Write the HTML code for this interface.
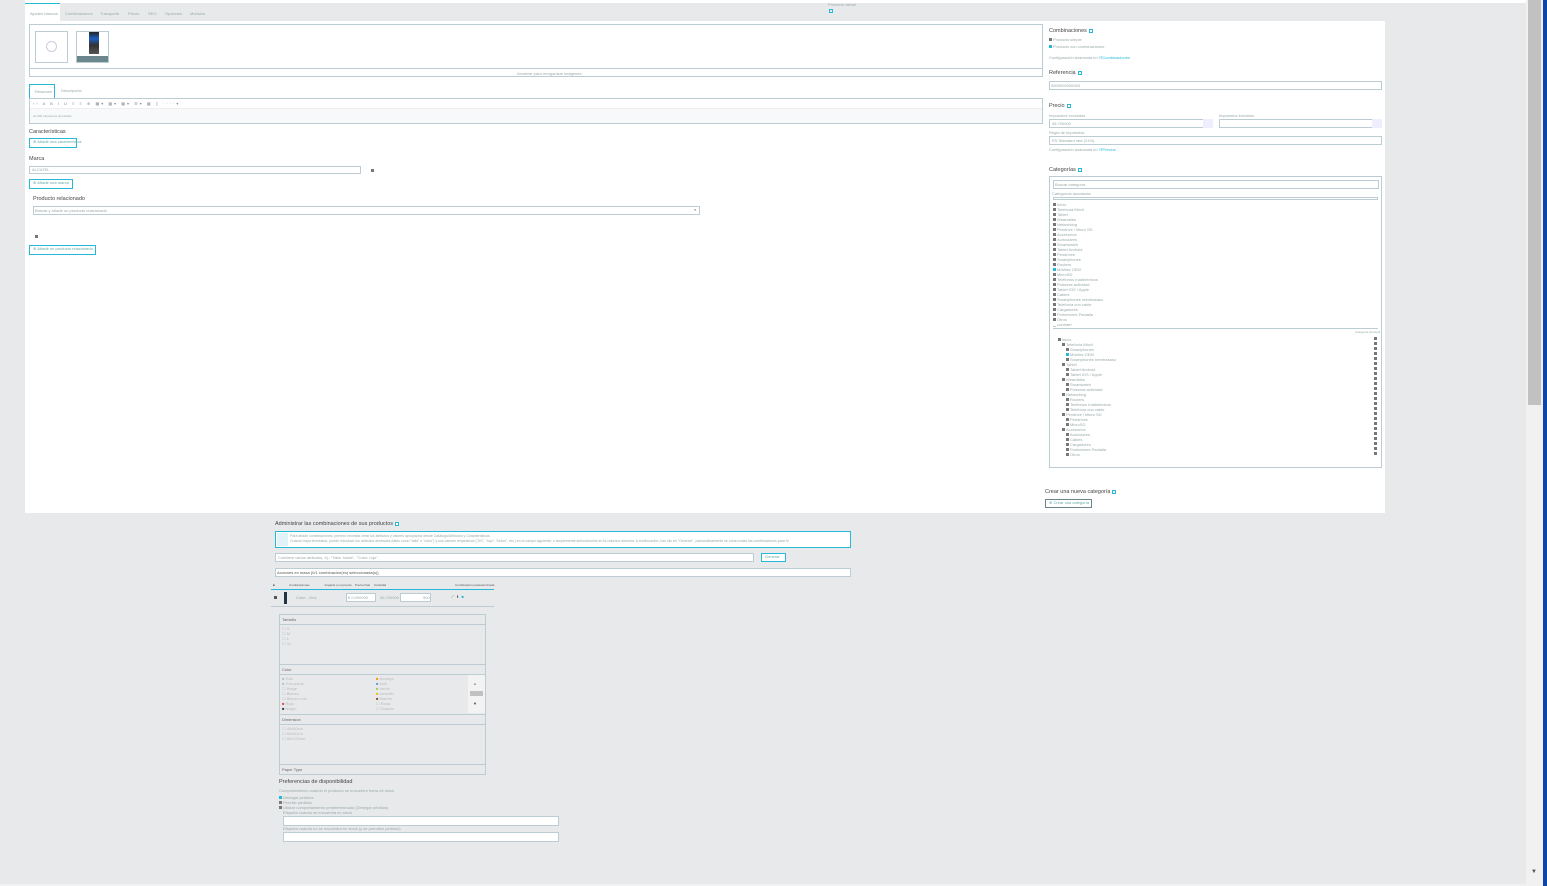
<!DOCTYPE html>
<html><head><meta charset="utf-8">
<style>
*{box-sizing:border-box;margin:0;padding:0}
body{width:1547px;height:886px;overflow:hidden;background:#e8e9eb;font-family:"Liberation Sans",sans-serif;color:#888;position:relative}
.a{position:absolute}
.t{font-size:4px;color:#9aa;white-space:nowrap;line-height:5px}
.h{font-size:5.5px;color:#444;white-space:nowrap}
.bx{border:1px solid #bbcdd3;background:#fff}
.btn{border:1.5px solid #25b9d7;background:#fff;font-size:4px;color:#4b8;line-height:6px;padding:0 3px;white-space:nowrap;color:#6aa}
.q{display:inline-block;width:4px;height:4px;background:#25b9d7;border:1px solid #25b9d7;box-shadow:inset 0 0 0 1px #fff;vertical-align:middle;margin-left:2px}
.li{font-size:4px;line-height:5px;color:#9aa;white-space:nowrap}
.li b{display:inline-block;width:3px;height:3px;background:#777;margin-right:1px;vertical-align:middle}
</style></head><body>
<!-- top strip -->
<div class="a" style="left:25px;top:0;width:1502px;height:3px;background:#fff"></div>
<!-- tabs -->
<div class="a" style="left:25px;top:3px;width:35px;height:18px;background:#fff;border-top:1px solid #25b9d7"></div>
<div class="a t" style="left:30px;top:11px">Ajustes básicos</div>
<div class="a t" style="left:65px;top:11px">Combinaciones</div>
<div class="a t" style="left:100px;top:11px">Transporte</div>
<div class="a t" style="left:128px;top:11px">Precio</div>
<div class="a t" style="left:148px;top:11px">SEO</div>
<div class="a t" style="left:165px;top:11px">Opciones</div>
<div class="a t" style="left:190px;top:11px">Módulos</div>
<div class="a t" style="left:828px;top:2px">Producto virtual</div>
<div class="a" style="left:829px;top:9px;width:4px;height:4px;border:1px solid #25b9d7"></div>
<!-- main panel -->
<div class="a" style="left:25px;top:21px;width:1360px;height:492px;background:#fff"></div>
<div class="a bx" style="left:29px;top:24px;width:1014px;height:53px"></div>
<div class="a" style="left:29px;top:68px;width:1014px;height:1px;background:#bbcdd3"></div>
<div class="a t" style="left:517px;top:71px">Arrastrar para reorganizar imágenes</div>
<div class="a bx" style="left:35px;top:31px;width:33px;height:32px"></div>
<div class="a" style="left:46px;top:41px;width:11px;height:11px;border:1px solid #ccd;border-radius:50%"></div>
<div class="a bx" style="left:76px;top:31px;width:33px;height:32px"></div>
<div class="a" style="left:89px;top:32px;width:10px;height:22px;background:linear-gradient(#222,#1a5fc0 30%,#333 60%,#555)"></div>
<div class="a" style="left:77px;top:56px;width:31px;height:6px;background:#6c868e"></div>
<!-- editor -->
<div class="a" style="left:29px;top:84px;width:26px;height:15px;border:1px solid #25b9d7;border-bottom:none;background:#fff"></div>
<div class="a t" style="left:35px;top:89px">Resumen</div>
<div class="a t" style="left:61px;top:88px">Descripción</div>
<div class="a bx" style="left:29px;top:98px;width:1014px;height:26px"></div>
<div class="a" style="left:30px;top:108px;width:1012px;height:15px;background:#f8f9fa;border-top:1px solid #eee"></div>
<div class="a t" style="left:33px;top:101px;color:#889;letter-spacing:2px">‹› A B I U ≡ ≡ ⊕ ▦▾ ▦▾ ▦▾ ☰▾ ▦ ▯ ····▾</div>
<div class="a t" style="left:33px;top:114px;font-size:3px">de 800 caracteres permitidos</div>
<div class="a h" style="left:29px;top:129px">Características</div>
<div class="a btn" style="left:29px;top:138px;height:10px;width:48px">⊕ Añadir una característica</div>
<div class="a h" style="left:29px;top:156px">Marca</div>
<div class="a bx" style="left:29px;top:166px;width:332px;height:8px"></div>
<div class="a t" style="left:32px;top:167px">ALCATEL</div>
<div class="a" style="left:371px;top:169px;width:3px;height:3px;background:#777"></div>
<div class="a btn" style="left:29px;top:179px;height:10px;width:44px">⊕ Añadir una marca</div>
<div class="a h" style="left:33px;top:196px">Producto relacionado</div>
<div class="a bx" style="left:33px;top:206px;width:667px;height:9px"></div>
<div class="a t" style="left:35px;top:208px">Buscar y añadir un producto relacionado</div>
<div class="a t" style="left:694px;top:207px;color:#555">⌕</div>
<div class="a" style="left:35px;top:235px;width:3px;height:3px;background:#777"></div>
<div class="a btn" style="left:29px;top:245px;height:10px;width:67px">⊕ Añadir un producto relacionado</div>
<!-- right column -->
<div class="a h" style="left:1049px;top:28px">Combinaciones<span class="q"></span></div>
<div class="a li" style="left:1049px;top:37px"><b></b>Producto simple</div>
<div class="a li" style="left:1049px;top:44px"><b style="background:#25b9d7"></b>Producto con combinaciones</div>
<div class="a li" style="left:1049px;top:55px">Configuración avanzada en <span style="color:#25b9d7">☷Combinaciones</span></div>
<div class="a h" style="left:1049px;top:70px">Referencia<span class="q"></span></div>
<div class="a bx" style="left:1049px;top:81px;width:333px;height:9px"></div>
<div class="a t" style="left:1051px;top:83px">0000000000083</div>
<div class="a h" style="left:1049px;top:103px">Precio<span class="q"></span></div>
<div class="a t" style="left:1049px;top:113px">Impuestos excluidos</div>
<div class="a t" style="left:1219px;top:113px">Impuestos incluidos</div>
<div class="a bx" style="left:1049px;top:119px;width:164px;height:9px"></div>
<div class="a t" style="left:1052px;top:121px">36,700000</div>
<div class="a" style="left:1203px;top:119px;width:10px;height:9px;background:#eef"></div>
<div class="a bx" style="left:1219px;top:119px;width:163px;height:9px"></div>
<div class="a" style="left:1372px;top:119px;width:10px;height:9px;background:#eef"></div>
<div class="a t" style="left:1049px;top:130px">Regla de impuestos</div>
<div class="a bx" style="left:1049px;top:136px;width:333px;height:9px"></div>
<div class="a t" style="left:1052px;top:138px">ES Standard rate (21%)</div>
<div class="a li" style="left:1049px;top:147px">Configuración avanzada en <span style="color:#25b9d7">☷Precios</span></div>
<div class="a h" style="left:1049px;top:167px">Categorías<span class="q"></span></div>
<div class="a bx" style="left:1049px;top:176px;width:333px;height:292px"></div>
<div class="a bx" style="left:1053px;top:180px;width:326px;height:9px"></div>
<div class="a t" style="left:1055px;top:182px">Buscar categoría</div>
<div class="a t" style="left:1052px;top:191px">Categorías asociadas</div>
<div class="a bx" style="left:1053px;top:197px;width:325px;height:3px"></div>
<div class="a" style="left:1053px;top:202px">
<div class="li"><b></b>Inicio</div><div class="li"><b></b>Telefonía Móvil</div><div class="li"><b></b>Tablet</div><div class="li"><b></b>Wearables</div><div class="li"><b></b>Networking</div><div class="li"><b></b>Pendrive / Micro SD</div><div class="li"><b></b>Accesorios</div><div class="li"><b></b>Auriculares</div><div class="li"><b></b>Smartwatch</div><div class="li"><b></b>Tablet Android</div><div class="li"><b></b>Pendrives</div><div class="li"><b></b>Smartphones</div><div class="li"><b></b>Routers</div><div class="li"><b style="background:#25b9d7"></b>Móviles OEM</div><div class="li"><b></b>MicroSD</div><div class="li"><b></b>Teléfonos Inalámbricos</div><div class="li"><b></b>Pulseras actividad</div><div class="li"><b></b>Tablet IOS / Apple</div><div class="li"><b></b>Cables</div><div class="li"><b></b>Smartphones reentrasaso</div><div class="li"><b></b>Telefonía con cable</div><div class="li"><b></b>Cargadores</div><div class="li"><b></b>Protectores Pantalla</div><div class="li"><b></b>Otros</div><div class="li">▁ contraer</div>
</div>
<div class="a" style="left:1053px;top:328px;width:325px;height:1px;background:#bbcdd3"></div>
<div class="a t" style="left:1355px;top:330px;font-size:3px">Categoría principal</div>
<div class="a" style="left:1058px;top:337px">
<div class="li"><b></b>Inicio</div><div class="li" style="padding-left:4px"><b></b>Telefonía Móvil</div><div class="li" style="padding-left:8px"><b></b>Smartphones</div><div class="li" style="padding-left:8px"><b style="background:#25b9d7"></b>Móviles OEM</div><div class="li" style="padding-left:8px"><b></b>Smartphones reentrasaso</div><div class="li" style="padding-left:4px"><b></b>Tablet</div><div class="li" style="padding-left:8px"><b></b>Tablet Android</div><div class="li" style="padding-left:8px"><b></b>Tablet IOS / Apple</div><div class="li" style="padding-left:4px"><b></b>Wearables</div><div class="li" style="padding-left:8px"><b></b>Smartwatch</div><div class="li" style="padding-left:8px"><b></b>Pulseras actividad</div><div class="li" style="padding-left:4px"><b></b>Networking</div><div class="li" style="padding-left:8px"><b></b>Routers</div><div class="li" style="padding-left:8px"><b></b>Teléfonos Inalámbricos</div><div class="li" style="padding-left:8px"><b></b>Telefonía con cable</div><div class="li" style="padding-left:4px"><b></b>Pendrive / Micro SD</div><div class="li" style="padding-left:8px"><b></b>Pendrives</div><div class="li" style="padding-left:8px"><b></b>MicroSD</div><div class="li" style="padding-left:4px"><b></b>Accesorios</div><div class="li" style="padding-left:8px"><b></b>Auriculares</div><div class="li" style="padding-left:8px"><b></b>Cables</div><div class="li" style="padding-left:8px"><b></b>Cargadores</div><div class="li" style="padding-left:8px"><b></b>Protectores Pantalla</div><div class="li" style="padding-left:8px"><b></b>Otros</div>
</div>
<div class="a" style="left:1374px;top:337px;width:3px;height:120px;background:repeating-linear-gradient(#777 0 3px,transparent 3px 5px)"></div>
<div class="a h" style="left:1045px;top:489px">Crear una nueva categoría<span class="q"></span></div>
<div class="a btn" style="left:1045px;top:499px;height:9px;width:47px;border-color:#6c868e">⊕ Crear una categoría</div>
<!-- combinations section -->
<div class="a h" style="left:275px;top:521px">Administrar las combinaciones de sus productos<span class="q"></span></div>
<div class="a" style="left:275px;top:531px;width:576px;height:17px;border:1.5px solid #25b9d7;background:#fff"></div>
<div class="a" style="left:277px;top:533px;width:11px;height:13px;background:#dff3f8"></div>
<div class="a t" style="left:290px;top:534px;font-size:3.5px;line-height:5px">Para añadir combinaciones, primero necesita crear los atributos y valores apropiados desde Catálogo/Atributos y Características.<br>Cuando haya terminado, puede introducir los atributos deseados (tales como "talla" o "color") y sus valores respectivos ("XS", "rojo", "todos", etc.) en el campo siguiente; o simplemente selecciónelos en la columna derecha. A continuación, haz clic en "Generar", ¡automáticamente se crean todas las combinaciones para ti!</div>
<div class="a bx" style="left:275px;top:553px;width:479px;height:9px"></div>
<div class="a t" style="left:278px;top:555px">Combine varios atributos, ej.: "Talla: todas", "Color: rojo".</div>
<div class="a btn" style="left:761px;top:553px;width:25px;height:9px;color:#6aa;line-height:5px">Generar</div>
<div class="a bx" style="left:275px;top:568px;width:576px;height:9px"></div>
<div class="a t" style="left:277px;top:570px;color:#555">Acciones en masa (0/1 combinación(es) seleccionada(s))</div>
<div class="a t" style="left:273px;top:583px;color:#555;font-size:3px">■&nbsp;&nbsp;&nbsp;&nbsp;&nbsp;&nbsp;&nbsp;&nbsp;&nbsp;&nbsp;&nbsp;&nbsp;&nbsp;&nbsp;&nbsp;&nbsp;&nbsp;Combinaciones&nbsp;&nbsp;&nbsp;&nbsp;&nbsp;&nbsp;&nbsp;&nbsp;&nbsp;&nbsp;&nbsp;&nbsp;&nbsp;&nbsp;&nbsp;&nbsp;&nbsp;&nbsp;Impacto en el precio&nbsp;&nbsp;&nbsp;&nbsp;Precio final&nbsp;&nbsp;&nbsp;&nbsp;&nbsp;Cantidad</div>
<div class="a t" style="left:455px;top:583px;font-size:3px;color:#555">Combinación predeterminada</div>
<div class="a" style="left:271px;top:589px;width:223px;height:1px;background:#25b9d7"></div>
<div class="a" style="left:274px;top:596px;width:3px;height:3px;background:#555"></div>
<div class="a" style="left:284px;top:592px;width:3px;height:12px;background:#234"></div>
<div class="a t" style="left:296px;top:595px">Color - Gris</div>
<div class="a bx" style="left:346px;top:593px;width:30px;height:9px"></div>
<div class="a t" style="left:348px;top:595px">€ 0,000000</div>
<div class="a t" style="left:380px;top:595px">36,700000</div>
<div class="a bx" style="left:400px;top:593px;width:31px;height:9px"></div>
<div class="a t" style="left:423px;top:595px">900</div>
<div class="a t" style="left:451px;top:594px;color:#555">⟋ &nbsp;▮ &nbsp;<span style="color:#25b9d7">■</span></div>
<div class="a" style="left:271px;top:606px;width:223px;height:1px;background:#bbcdd3"></div>
<!-- attributes box -->
<div class="a" style="left:279px;top:614px;width:207px;height:161px;border:1px solid #bbcdd3"></div>
<div class="a" style="left:279px;top:624px;width:207px;height:1px;background:#bbcdd3"></div>
<div class="a" style="left:279px;top:664px;width:207px;height:1px;background:#bbcdd3"></div>
<div class="a" style="left:279px;top:674px;width:207px;height:1px;background:#bbcdd3"></div>
<div class="a" style="left:279px;top:714px;width:207px;height:1px;background:#bbcdd3"></div>
<div class="a" style="left:279px;top:724px;width:207px;height:1px;background:#bbcdd3"></div>
<div class="a" style="left:279px;top:764px;width:207px;height:1px;background:#bbcdd3"></div>
<div class="a t" style="left:282px;top:617px;color:#666">Tamaño</div>
<div class="a t" style="left:282px;top:667px;color:#666">Color</div>
<div class="a t" style="left:282px;top:717px;color:#666">Dimension</div>
<div class="a t" style="left:282px;top:767px;color:#666">Paper Type</div>
<div class="a t" style="left:282px;top:626px;color:#bbb">☐ S<br>☐ M<br>☐ L<br>☐ XL</div>
<div class="a t" style="left:282px;top:676px;color:#bbb">■ Gris<br>■ Gris pardo<br>☐ Beige<br>☐ Blanco<br>☐ Blanco roto<br><span style="color:#d44">■</span> Rojo<br><span style="color:#334">■</span> Negro</div>
<div class="a t" style="left:376px;top:676px;color:#bbb"><span style="color:#e90">■</span> Naranja<br><span style="color:#59d">■</span> Azul<br><span style="color:#9c6">■</span> Verde<br><span style="color:#eb0">■</span> Amarillo<br><span style="color:#842">■</span> Marrón<br>☐ Rosa<br>☐ Dorado</div>
<div class="a" style="left:468px;top:675px;width:17px;height:38px;background:#f3f3f3"></div>
<div class="a" style="left:470px;top:691px;width:13px;height:5px;background:#c1c1c1"></div>
<div class="a t" style="left:473px;top:681px;color:#999">▲</div>
<div class="a t" style="left:473px;top:701px;color:#444">▼</div>
<div class="a t" style="left:282px;top:726px;color:#bbb">☐ 40x60cm<br>☐ 60x90cm<br>☐ 80x120cm</div>
<div class="a h" style="left:279px;top:779px">Preferencias de disponibilidad</div>
<div class="a t" style="left:279px;top:788px">Comportamiento cuando el producto se encuentre fuera de stock</div>
<div class="a li" style="left:279px;top:795px"><b style="background:#25b9d7"></b>Denegar pedidos</div>
<div class="a li" style="left:279px;top:800px"><b></b>Permitir pedidos</div>
<div class="a li" style="left:279px;top:805px"><b></b>Utilizar comportamiento predeterminado (Denegar pedidos)</div>
<div class="a t" style="left:283px;top:810px">Etiqueta cuando se encuentra en stock</div>
<div class="a bx" style="left:283px;top:816px;width:276px;height:10px"></div>
<div class="a t" style="left:283px;top:826px">Etiqueta cuando no se encuentra en stock (y se permiten pedidos)</div>
<div class="a bx" style="left:283px;top:832px;width:276px;height:10px"></div>
<!-- scrollbar -->
<div class="a" style="left:1526px;top:0;width:17px;height:886px;background:#f1f1f1"></div>
<div class="a" style="left:1528px;top:0;width:13px;height:405px;background:#c1c1c1"></div>
<div class="a t" style="left:1531px;top:870px;color:#505050;font-size:6px">▼</div>
<div class="a" style="left:1543px;top:0;width:4px;height:886px;background:#0b47a8"></div>
<div class="a" style="left:0;top:884px;width:1526px;height:2px;background:#f1f1f1"></div>
</body></html>
